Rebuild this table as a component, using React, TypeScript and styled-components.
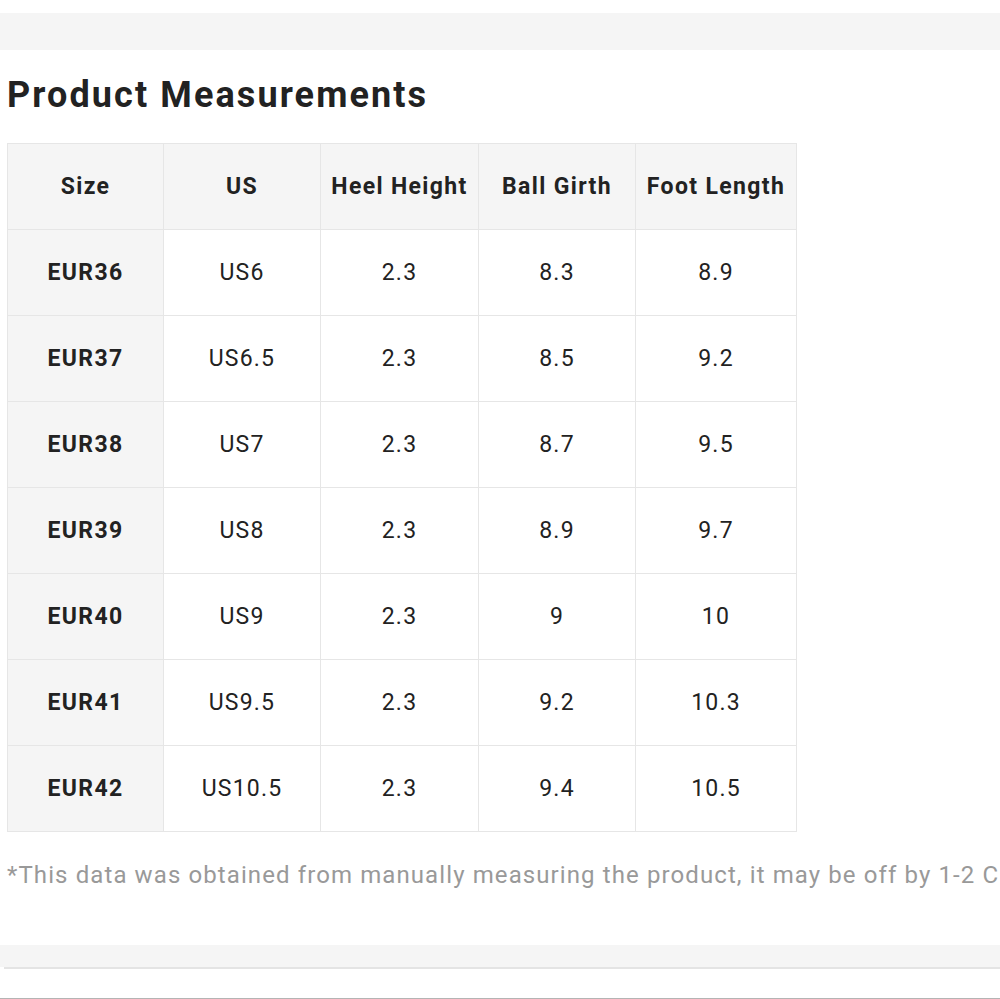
import React from "react";
import styled, { createGlobalStyle } from "styled-components";

const GlobalStyle = createGlobalStyle`
  html, body { margin: 0; padding: 0; background: #ffffff; }
  body { font-family: Roboto, "Liberation Sans", Arial, sans-serif; color: #222222; }
`;

const Page = styled.div`
  width: 1000px;
  height: 999px;
  overflow: hidden;
  display: flex;
  flex-direction: column;
  box-sizing: border-box;
  padding-top: 13px;
  border-bottom: 1px solid #b4b4b4;
`;

const Band = styled.div`
  height: 37px;
  background: #f5f5f5;
  flex-shrink: 0;
`;

const Section = styled.section`
  padding: 0 0 0 7px;
  display: flex;
  flex-direction: column;
`;

const Heading = styled.h2`
  margin: 23px 0 0 0;
  font-size: 36px;
  line-height: 44px;
  font-weight: 700;
  letter-spacing: 2.1px;
  color: #222222;
  white-space: nowrap;
`;

const Table = styled.table`
  margin-top: 26px;
  border-collapse: collapse;
  table-layout: fixed;
  width: 789px;
`;

const Cell = styled.td<{ $head?: boolean; $shade?: boolean }>`
  height: 86px;
  box-sizing: border-box;
  border: 1px solid #e6e6e6;
  text-align: center;
  vertical-align: middle;
  padding: 0;
  font-size: 23px;
  letter-spacing: ${(p) => (p.$head ? "1.35px" : "1.2px")};
  font-weight: ${(p) => (p.$head ? 700 : 400)};
  background: ${(p) => (p.$shade ? "#f5f5f5" : "#ffffff")};
  color: #222222;
  white-space: nowrap;
`;

const Note = styled.p`
  margin: 28px 0 0 0;
  font-size: 24px;
  line-height: 30px;
  letter-spacing: 1.1px;
  color: #999999;
  white-space: nowrap;
`;

const BottomBand = styled.div`
  margin-top: 55px;
  height: 22px;
  background: #f5f5f5;
  flex-shrink: 0;
`;

const BandRule = styled.div`
  margin-left: 4px;
  height: 2px;
  background: #e4e4e4;
  flex-shrink: 0;
`;

const headers = ["Size", "US", "Heel Height", "Ball Girth", "Foot Length"];
const widths = [156, 157, 158, 157, 161];
const rows = [
  ["EUR36", "US6", "2.3", "8.3", "8.9"],
  ["EUR37", "US6.5", "2.3", "8.5", "9.2"],
  ["EUR38", "US7", "2.3", "8.7", "9.5"],
  ["EUR39", "US8", "2.3", "8.9", "9.7"],
  ["EUR40", "US9", "2.3", "9", "10"],
  ["EUR41", "US9.5", "2.3", "9.2", "10.3"],
  ["EUR42", "US10.5", "2.3", "9.4", "10.5"],
];

export default function App() {
  return (
    <>
      <GlobalStyle />
      <Page>
        <Band />
        <Section>
          <Heading>Product Measurements</Heading>
          <Table>
            <colgroup>
              {widths.map((w, i) => (
                <col key={i} style={{ width: w }} />
              ))}
            </colgroup>
            <thead>
              <tr>
                {headers.map((h) => (
                  <Cell as="th" key={h} $head $shade>
                    {h}
                  </Cell>
                ))}
              </tr>
            </thead>
            <tbody>
              {rows.map((r) => (
                <tr key={r[0]}>
                  {r.map((c, i) => (
                    <Cell key={i} $head={i === 0} $shade={i === 0}>
                      {c}
                    </Cell>
                  ))}
                </tr>
              ))}
            </tbody>
          </Table>
          <Note>*This data was obtained from manually measuring the product, it may be off by 1-2 CM</Note>
        </Section>
        <BottomBand />
        <BandRule />
      </Page>
    </>
  );
}
